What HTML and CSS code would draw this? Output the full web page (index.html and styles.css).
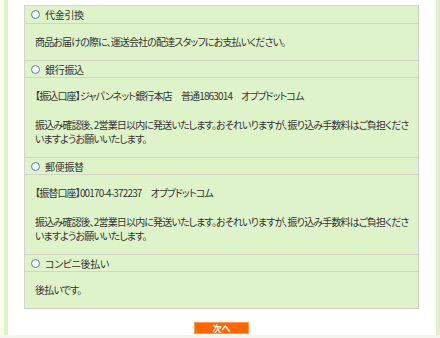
FILE: index.html
```html
<!DOCTYPE html>
<html lang="ja">
<head>
	<meta charset="UTF-8">
	<title>お支払い方法</title>
	<link rel="stylesheet" href="styles.css">
</head>
<body>
	<div class="page">
		<div class="side-left"></div>
		<div class="main">
			<div class="payment">
				<div class="method">
					<label class="head"><span class="radio"></span>代金引換</label>
					<div class="body">
						<p>商品お届けの際に、運送会社の配達スタッフにお支払いください。</p>
					</div>
				</div>
				<div class="method">
					<label class="head"><span class="radio"></span>銀行振込</label>
					<div class="body">
						<p>【振込口座】ジャパンネット銀行本店　普通1863014　オブブドットコム</p>
						<p>振込み確認後、2営業日以内に発送いたします。おそれいりますが、振り込み手数料はご負担くださ<br>いますようお願いいたします。</p>
					</div>
				</div>
				<div class="method">
					<label class="head"><span class="radio"></span>郵便振替</label>
					<div class="body">
						<p>【振替口座】00170-4-372237　オブブドットコム</p>
						<p>振込み確認後、2営業日以内に発送いたします。おそれいりますが、振り込み手数料はご負担くださ<br>いますようお願いいたします。</p>
					</div>
				</div>
				<div class="method">
					<label class="head"><span class="radio"></span>コンビニ後払い</label>
					<div class="body">
						<p>後払いです。</p>
					</div>
				</div>
			</div>
			<div class="actions">
				<button class="next">次へ</button>
			</div>
		</div>
		<div class="side-right"></div>
	</div>
	<div class="foot"></div>
</body>
</html>
```

FILE: styles.css
```css
*{
	padding: 0;
	margin: 0;
	box-sizing: border-box;
}
body{
	font-family: "Noto Sans CJK JP", "Liberation Sans", sans-serif;
	font-size: 10px;
	color: #333;
	background: #fff;
}
.page{
	display: flex;
	height: 335px;
}
.side-left{
	flex: none;
	width: 8px;
	background: #f8fbe9;
	border-right: 4px solid #dff2ca;
}
.side-right{
	flex: none;
	width: 4px;
	background: #dff2ca;
}
.main{
	flex: 1;
	min-width: 0;
	padding: 5px 17px 0 16px;
}
.payment{
	background: #dff3ca;
	border: 1px solid #d2d6cc;
	border-right-color: #c9cdc3;
	border-bottom-color: #c9cdc3;
	overflow: hidden;
}
.head{
	display: flex;
	align-items: center;
	height: 18px;
	padding-left: 6px;
	border-bottom: 1px solid #cfd6c4;
	line-height: 17px;
	letter-spacing: -0.3px;
	font-feature-settings: "palt";
}
.method + .method .head{
	border-top: 1px solid #cfd6c4;
}
.radio{
	width: 9px;
	height: 9px;
	border: 1px solid #5d7fae;
	border-radius: 50%;
	background: #f4f7fb;
	margin-right: 5px;
}
.body{
	padding: 11px 9px 11px 10px;
	line-height: 14px;
	letter-spacing: -0.85px;
	font-feature-settings: "palt";
	white-space: nowrap;
}
.body p + p{
	margin-top: 15px;
}
.actions{
	display: flex;
	justify-content: center;
	padding-top: 13px;
}
.next{
	width: 55px;
	height: 12px;
	background: #ff6600;
	border: 1px solid #ff9a4d;
	color: #fff;
	font-family: inherit;
	font-size: 9px;
	font-weight: bold;
	line-height: 9px;
}
.foot{
	height: 3px;
	background: #f4f5ef;
}
```
